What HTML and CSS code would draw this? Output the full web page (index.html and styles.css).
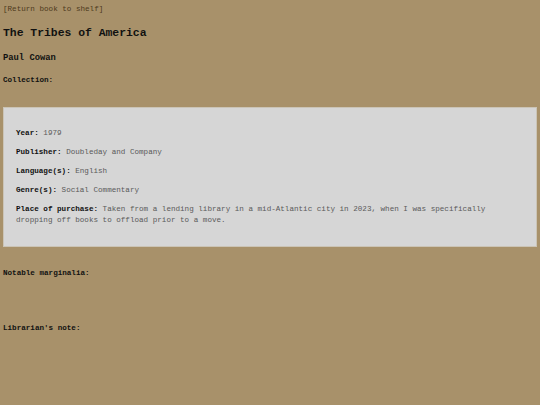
FILE: index.html
```html
<!DOCTYPE html>
<html lang="en">

<head>
    <meta charset="UTF-8">
    <meta name="viewport" content="width=device-width, initial-scale=1.0">
    <title>The Tribes of America</title>
    <link rel="stylesheet" href="styles.css">
</head>

<body>
    <a class="back" href="#">[Return book to shelf]</a>
    <h1 class="title">The Tribes of America</h1>
    <h2 class="author">Paul Cowan</h2>
    <p class="section">Collection:</p>

    <div class="details">
        <p><b>Year:</b> 1979</p>
        <p><b>Publisher:</b> Doubleday and Company</p>
        <p><b>Language(s):</b> English</p>
        <p><b>Genre(s):</b> Social Commentary</p>
        <p><b>Place of purchase:</b> Taken from a lending library in a mid-Atlantic city in 2023, when I was specifically dropping off books to offload prior to a move.</p>
    </div>

    <p class="section marginalia">Notable marginalia:</p>
    <p class="section note">Librarian's note:</p>
</body>

</html>
```

FILE: styles.css
```css
body {
    font-family: 'Liberation Mono', 'Courier New', monospace;
    background: #a8916a;
    color: #111;
    margin: 0;
    padding: 4px 3px 0;
    font-size: 7.6px;
}

.back {
    display: block;
    color: #4e3a1c;
    text-decoration: none;
    line-height: 10px;
}

.title {
    font-size: 11.4px;
    line-height: 14px;
    margin: 12px 0 0;
}

.author {
    font-size: 8.8px;
    line-height: 12px;
    margin: 12px 0 0;
}

.section {
    font-weight: bold;
    line-height: 10px;
    margin: 11px 0 0;
}

.details {
    background: #d6d6d6;
    border: 1px solid #cbc4b6;
    margin-top: 22px;
    padding: 20px 12px 20px;
    color: #5a5a5a;
}

.details p {
    line-height: 11px;
    margin: 0 0 8px;
}

.details p:last-child {
    margin-bottom: 0;
}

.details b {
    color: #111;
}

.marginalia {
    margin-top: 21px;
}

.note {
    margin-top: 45px;
}
```
